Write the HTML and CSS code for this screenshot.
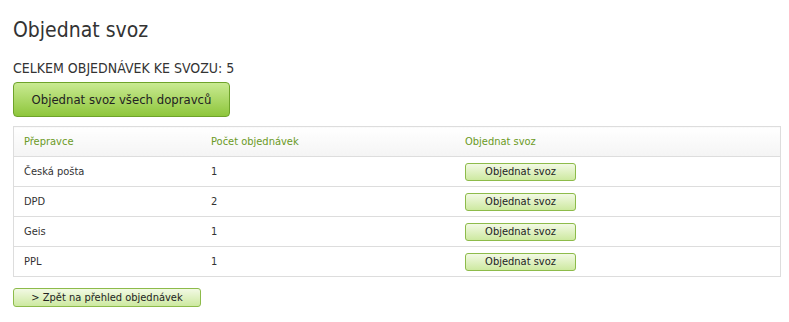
FILE: index.html
```html
<!DOCTYPE html>
<html lang="cs">
<head>
    <meta charset="UTF-8">
    <title>Objednat svoz</title>
    <link rel="stylesheet" href="styles.css">
</head>
<body>
    <div class="page">
        <h1>Objednat svoz</h1>
        <p class="total">CELKEM OBJEDNÁVEK KE SVOZU: 5</p>
        <button class="btn btn-big">Objednat svoz všech dopravců</button>

        <table class="pickup-table">
            <thead>
                <tr>
                    <th class="col-carrier">Přepravce</th>
                    <th class="col-count">Počet objednávek</th>
                    <th>Objednat svoz</th>
                </tr>
            </thead>
            <tbody>
                <tr>
                    <td>Česká pošta</td>
                    <td>1</td>
                    <td><button class="btn btn-small">Objednat svoz</button></td>
                </tr>
                <tr>
                    <td>DPD</td>
                    <td>2</td>
                    <td><button class="btn btn-small">Objednat svoz</button></td>
                </tr>
                <tr>
                    <td>Geis</td>
                    <td>1</td>
                    <td><button class="btn btn-small">Objednat svoz</button></td>
                </tr>
                <tr>
                    <td>PPL</td>
                    <td>1</td>
                    <td><button class="btn btn-small">Objednat svoz</button></td>
                </tr>
            </tbody>
        </table>

        <button class="btn btn-back">&gt; Zpět na přehled objednávek</button>
    </div>
</body>
</html>
```

FILE: styles.css
```css
body {
    margin: 0;
    padding: 0;
    background: #fff;
    font-family: Tahoma, "DejaVu Sans Condensed", "DejaVu Sans", sans-serif;
    color: #333;
}

.page {
    padding: 16px 9px 0 13px;
}

h1 {
    margin: 0;
    font-size: 21px;
    font-weight: normal;
    line-height: 28px;
    color: #333;
}

.total {
    margin: 16px 0 0;
    font-size: 14px;
    line-height: 16px;
    color: #333;
}

.btn {
    display: block;
    font-family: inherit;
    color: #222;
    cursor: pointer;
    background: linear-gradient(#f2f9e4, #cde9a0);
    border: 1px solid #8dbb4a;
    border-radius: 3px;
    padding: 0;
}

.btn-big {
    margin-top: 6px;
    width: 217px;
    height: 35px;
    font-size: 13px;
    background: linear-gradient(#c9ea92, #8ec63c);
    border-color: #6ea32a;
    border-radius: 4px;
}

.btn-small {
    width: 111px;
    height: 18px;
    font-size: 11px;
}

.btn-back {
    margin-top: 11px;
    width: 188px;
    height: 19px;
    font-size: 11px;
}

.pickup-table {
    margin-top: 9px;
    width: 768px;
    border-collapse: collapse;
    border: 1px solid #ddd;
    font-size: 11px;
}

.pickup-table th,
.pickup-table td {
    height: 29px;
    padding: 0 10px;
    text-align: left;
    border-top: 1px solid #ddd;
}

.pickup-table th {
    font-weight: normal;
    color: #6b9a25;
    background: linear-gradient(#fff, #f4f4f4);
}

.col-carrier {
    width: 167px;
}

.col-count {
    width: 234px;
}
```
